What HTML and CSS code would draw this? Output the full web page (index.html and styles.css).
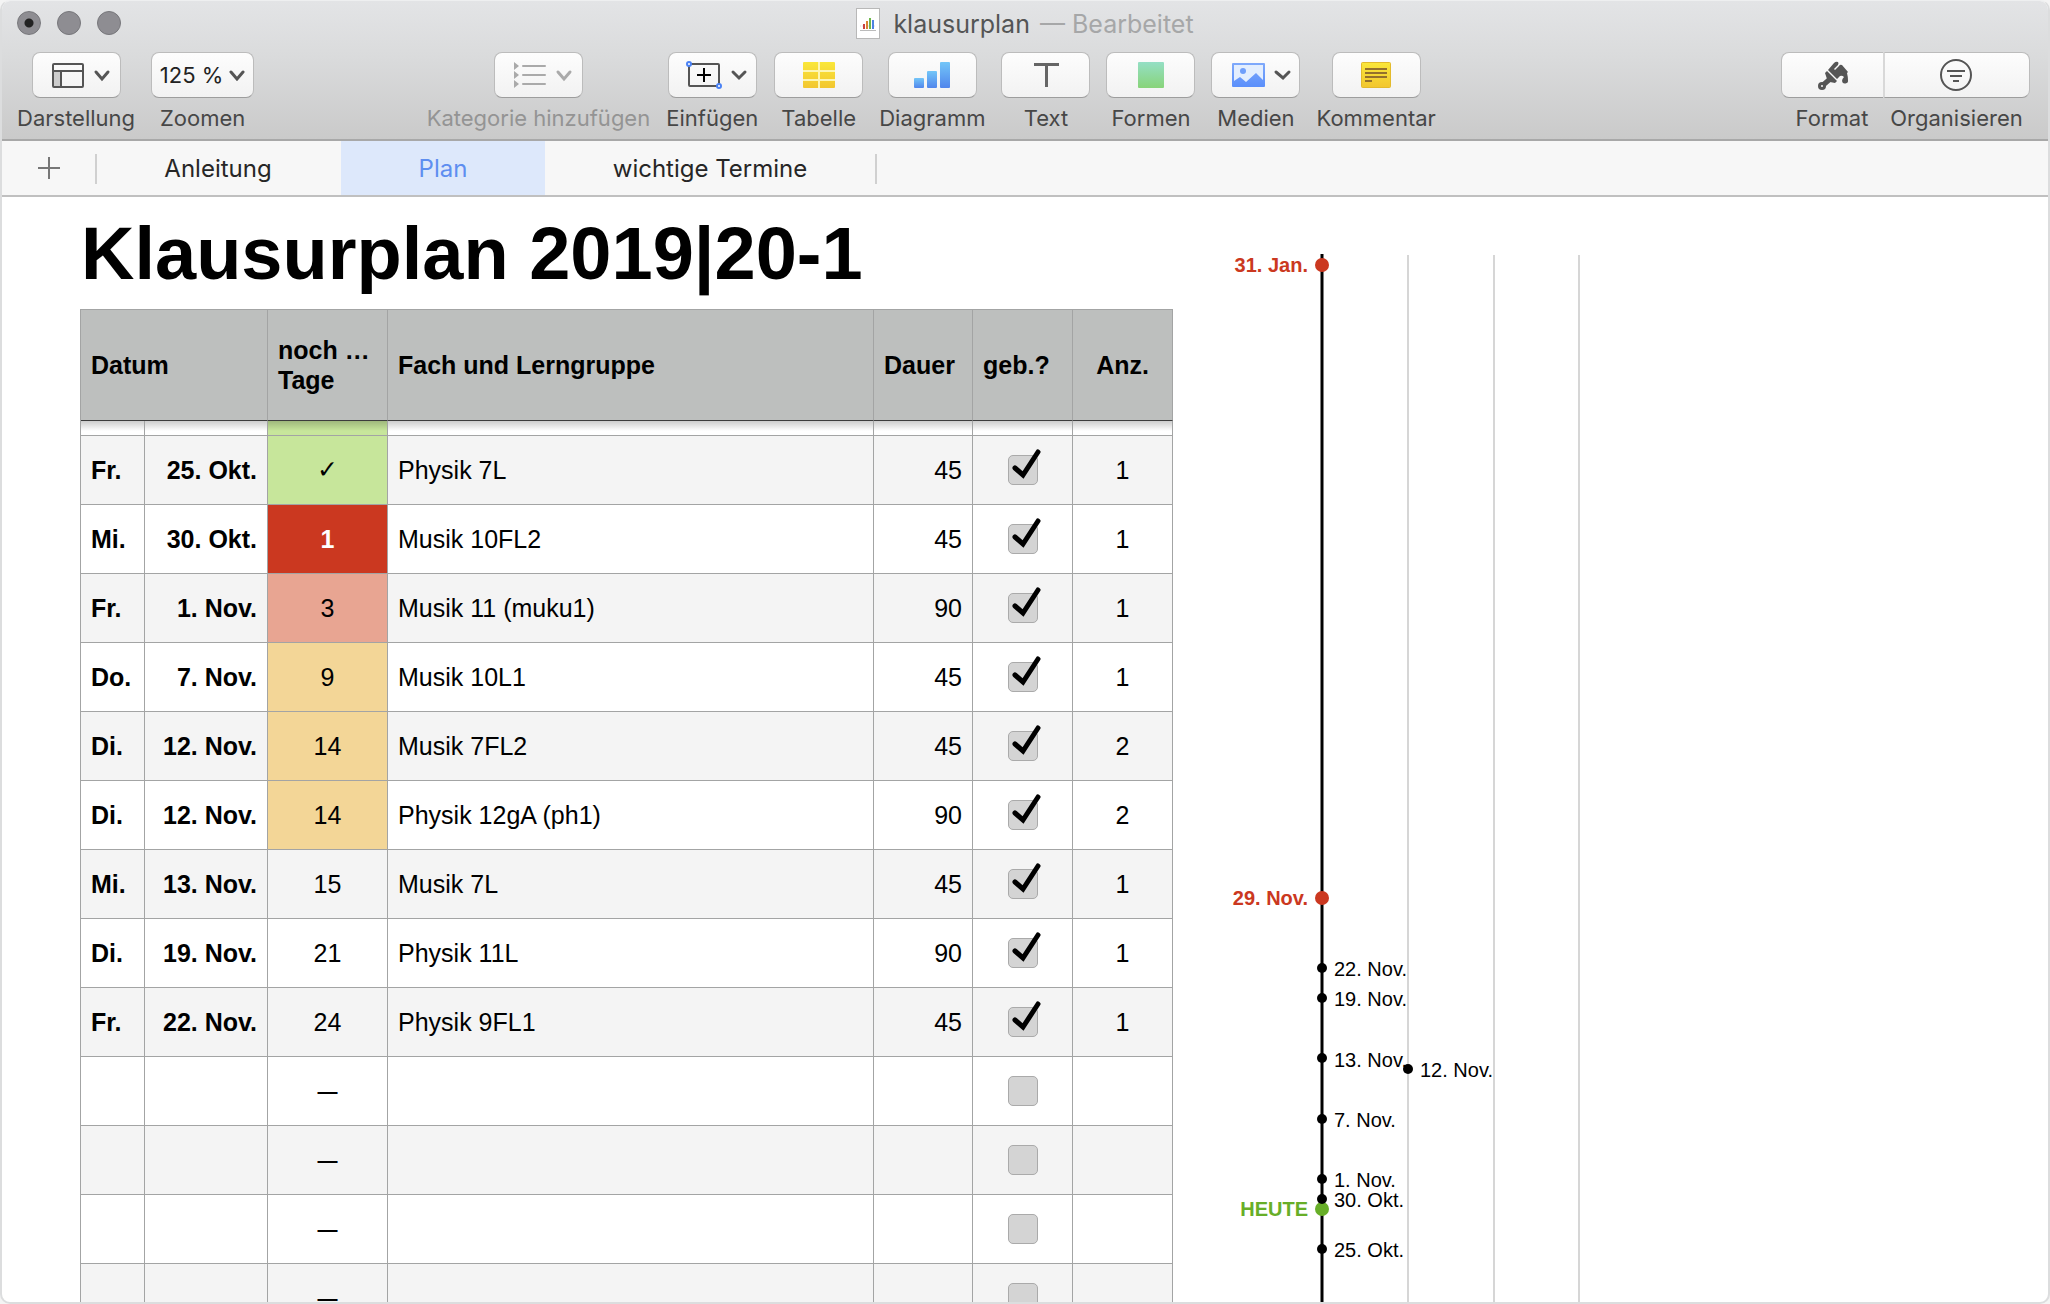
FILE: index.html
```html
<!DOCTYPE html>
<html lang="de">
<head>
<meta charset="utf-8">
<title>klausurplan</title>
<link rel="stylesheet" href="styles.css">
</head>
<body>
<svg class="defs" aria-hidden="true">
  <defs>
    <linearGradient id="yellow" x1="0" y1="0" x2="0" y2="1"><stop offset="0" stop-color="#fae73a"/><stop offset="1" stop-color="#f2c62f"/></linearGradient>
    <linearGradient id="blue" x1="0" y1="0" x2="0" y2="1"><stop offset="0" stop-color="#73c6f8"/><stop offset="1" stop-color="#5186ec"/></linearGradient>
    <linearGradient id="green" x1="0" y1="0" x2="0" y2="1"><stop offset="0" stop-color="#95dfc5"/><stop offset="1" stop-color="#88d479"/></linearGradient>
    <linearGradient id="photo" x1="0" y1="0" x2="0" y2="1"><stop offset="0" stop-color="#7fa9fb"/><stop offset="1" stop-color="#5b8ffb"/></linearGradient>
    <symbol id="tick" viewBox="0 0 40 32" overflow="visible"><path d="M7 17 L15 24 L30 1" fill="none" stroke="#000" stroke-width="5" stroke-linecap="round" stroke-linejoin="miter"/></symbol>
  </defs>
</svg>
<div class="window">
  <header class="chrome">
    <div class="titlebar">
      <div class="lights">
        <button class="light light-edited" aria-label="Schließen"></button>
        <button class="light" aria-label="Minimieren"></button>
        <button class="light" aria-label="Vergrößern"></button>
      </div>
      <div class="doc">
        <svg width="24" height="32" viewBox="0 0 24 32"><rect x=".5" y=".5" width="23" height="30" fill="#fff" stroke="#b8b8b8"/><path d="M4 22.500h16" stroke="#bbb"/><path d="M4 18h16" stroke="#ddd" stroke-dasharray="1 1"/><path d="M8 16v5" stroke="#c9413f" stroke-width="2"/><path d="M11 13v8" stroke="#d98433" stroke-width="2"/><path d="M14 10v11" stroke="#6cb84a" stroke-width="2"/><path d="M17 12v9" stroke="#4d83e0" stroke-width="2"/></svg>
        <span class="doc-name">klausurplan</span>
        <span class="doc-state">— Bearbeitet</span>
      </div>
    </div>
    <div class="toolbar">
      <div class="tools">
        <div class="tool">
          <button class="btn" aria-labelledby="l1"><svg width="88" height="44" viewBox="0 0 88 44" fill="none" stroke="#555" stroke-width="2"><rect x="21" y="18" width="7" height="16" fill="#ccc" stroke="none"/><rect x="21" y="11" width="30" height="23" rx="1"/><path d="M21 18h30M29 18v16"/><path d="M64 19l6 7 6-7" stroke-width="3" stroke-linecap="round"/></svg></button>
          <span class="label" id="l1">Darstellung</span>
        </div>
        <div class="tool">
          <button class="btn btn-zoom" aria-labelledby="l2"><span>125 %</span><svg width="16" height="12" viewBox="0 0 16 12" fill="none" stroke="#555" stroke-width="3" stroke-linecap="round"><path d="M2 3l6 7 6-7"/></svg></button>
          <span class="label" id="l2">Zoomen</span>
        </div>
      </div>
      <div class="tools tools-insert">
        <div class="tool tool-off">
          <button class="btn" disabled aria-labelledby="l3"><svg width="88" height="44" viewBox="0 0 88 44" fill="none" stroke="#aaa" stroke-width="2"><path d="M20 9l5 4-5 4zM20 18l5 4-5 4zM20 27l5 4-5 4z" fill="#aaa" stroke="none"/><path d="M29 13h22M29 22h22M29 31h22" stroke-linecap="round"/><path d="M64 19l6 7 6-7" stroke-width="3" stroke-linecap="round"/></svg></button>
          <span class="label" id="l3">Kategorie hinzufügen</span>
        </div>
        <div class="tool">
          <button class="btn" aria-labelledby="l4"><svg width="88" height="44" viewBox="0 0 88 44" fill="none" stroke="#555" stroke-width="2"><rect x="21" y="11" width="30" height="22" rx="1"/><path d="M36 15v14M29 22h14" stroke="#000"/><circle cx="21" cy="11" r="2" fill="#fff" stroke="#4a82f5"/><circle cx="51" cy="33" r="2" fill="#fff" stroke="#4a82f5"/><path d="M65 19l6 6 6-6" stroke-width="3" stroke-linecap="round"/></svg></button>
          <span class="label" id="l4">Einfügen</span>
        </div>
        <div class="tool">
          <button class="btn" aria-labelledby="l5"><svg width="88" height="44" viewBox="0 0 88 44"><rect x="28" y="9" width="32" height="26" rx="1" fill="url(#yellow)"/><path d="M44 9v26M28 18h32M28 27h32" stroke="#fdf6b4" stroke-width="2"/></svg></button>
          <span class="label" id="l5">Tabelle</span>
        </div>
        <div class="tool">
          <button class="btn" aria-labelledby="l6"><svg width="88" height="44" viewBox="0 0 88 44" fill="url(#blue)"><rect x="26" y="25" width="10" height="10" rx="1"/><rect x="39" y="18" width="10" height="17" rx="1"/><rect x="52" y="9" width="10" height="26" rx="1"/></svg></button>
          <span class="label" id="l6">Diagramm</span>
        </div>
        <div class="tool">
          <button class="btn" aria-labelledby="l7"><svg width="88" height="44" viewBox="0 0 88 44"><path d="M32 10h25v3h-11v21h-3v-21h-11z" fill="#666"/></svg></button>
          <span class="label" id="l7">Text</span>
        </div>
        <div class="tool">
          <button class="btn" aria-labelledby="l8"><svg width="88" height="44" viewBox="0 0 88 44"><rect x="31" y="9" width="26" height="26" rx="1" fill="url(#green)"/></svg></button>
          <span class="label" id="l8">Formen</span>
        </div>
        <div class="tool">
          <button class="btn" aria-labelledby="l9"><svg width="88" height="44" viewBox="0 0 88 44"><rect x="20" y="10" width="33" height="24" rx="1" fill="url(#photo)"/><path d="M22 12h29v15l-7-7-10 9-6-5-6 4z" fill="#e3eefe"/><circle cx="31" cy="18" r="3" fill="#6f9ffb"/><path d="M64 19l7 6 6-6" fill="none" stroke="#555" stroke-width="3" stroke-linecap="round"/></svg></button>
          <span class="label" id="l9">Medien</span>
        </div>
        <div class="tool">
          <button class="btn" aria-labelledby="l10"><svg width="88" height="44" viewBox="0 0 88 44"><rect x="29.500" y="9.500" width="29" height="25" rx="1" fill="url(#yellow)" stroke="#e3ba2c"/><path d="M33 16h22M33 20h22M33 24h22M33 28h7" stroke="#94702c" stroke-width="2"/></svg></button>
          <span class="label" id="l10">Kommentar</span>
        </div>
      </div>
      <div class="segments">
        <div class="tool">
          <button class="btn btn-left" aria-labelledby="l11"><svg width="88" height="44" viewBox="0 0 88 44" fill="#555"><path d="M39 17l6-7q2-2 4-1 1 1 0 3l-4 4 1 1 4-4q1-2 3-1l6 7-1 1q1 4 1 7a3 3 0 1 1-6 1q0-2 2-4-2-2-4-1l-3 3z"/><path d="M36 20l2-2 10 10-2 2-5-1-3-3z"/><path d="M41 26l-8 7" stroke="#555" stroke-width="5" stroke-linecap="round"/><circle cx="33" cy="33" r="4"/><circle cx="33" cy="33" r="1" fill="#f7f7f7"/></svg></button>
          <span class="label" id="l11">Format</span>
        </div>
        <div class="tool">
          <button class="btn btn-right" aria-labelledby="l12"><svg width="88" height="44" viewBox="0 0 88 44" fill="none" stroke="#555" stroke-width="2"><circle cx="43" cy="22" r="15"/><path d="M34 18h18M37 23h12M40 28h6"/></svg></button>
          <span class="label" id="l12">Organisieren</span>
        </div>
      </div>
    </div>
  </header>
  <nav class="tabs">
    <button class="add" aria-label="Blatt hinzufügen"><svg width="22" height="22" viewBox="0 0 22 22"><path d="M0 11h22M11 0v22" stroke="#777" stroke-width="2"/></svg></button>
    <a class="tab" href="#anleitung">Anleitung</a>
    <a class="tab tab-on" href="#plan">Plan</a>
    <a class="tab tab-wide" href="#termine">wichtige Termine</a>
  </nav>
  <main class="sheet">
    <section class="plan">
      <h1>Klausurplan 2019|20-1</h1>
      <table>
        <colgroup><col class="c-day"><col class="c-date"><col class="c-left"><col class="c-subject"><col class="c-time"><col class="c-ok"><col class="c-count"></colgroup>
        <thead>
          <tr><th colspan="2">Datum</th><th>noch … Tage</th><th>Fach und Lerngruppe</th><th>Dauer</th><th>geb.?</th><th class="mid">Anz.</th></tr>
        </thead>
        <tbody>
          <tr class="peek"><td></td><td></td><td class="done"></td><td></td><td></td><td></td><td></td></tr>
          <tr><td>Fr.</td><td>25. Okt.</td><td class="done check">✓</td><td>Physik 7L</td><td>45</td><td><label class="box"><input type="checkbox" checked aria-label="gebucht"><svg><use href="#tick"/></svg></label></td><td>1</td></tr>
          <tr><td>Mi.</td><td>30. Okt.</td><td class="urgent">1</td><td>Musik 10FL2</td><td>45</td><td><label class="box"><input type="checkbox" checked aria-label="gebucht"><svg><use href="#tick"/></svg></label></td><td>1</td></tr>
          <tr><td>Fr.</td><td>1. Nov.</td><td class="near">3</td><td>Musik 11 (muku1)</td><td>90</td><td><label class="box"><input type="checkbox" checked aria-label="gebucht"><svg><use href="#tick"/></svg></label></td><td>1</td></tr>
          <tr><td>Do.</td><td>7. Nov.</td><td class="soon">9</td><td>Musik 10L1</td><td>45</td><td><label class="box"><input type="checkbox" checked aria-label="gebucht"><svg><use href="#tick"/></svg></label></td><td>1</td></tr>
          <tr><td>Di.</td><td>12. Nov.</td><td class="soon">14</td><td>Musik 7FL2</td><td>45</td><td><label class="box"><input type="checkbox" checked aria-label="gebucht"><svg><use href="#tick"/></svg></label></td><td>2</td></tr>
          <tr><td>Di.</td><td>12. Nov.</td><td class="soon">14</td><td>Physik 12gA (ph1)</td><td>90</td><td><label class="box"><input type="checkbox" checked aria-label="gebucht"><svg><use href="#tick"/></svg></label></td><td>2</td></tr>
          <tr><td>Mi.</td><td>13. Nov.</td><td>15</td><td>Musik 7L</td><td>45</td><td><label class="box"><input type="checkbox" checked aria-label="gebucht"><svg><use href="#tick"/></svg></label></td><td>1</td></tr>
          <tr><td>Di.</td><td>19. Nov.</td><td>21</td><td>Physik 11L</td><td>90</td><td><label class="box"><input type="checkbox" checked aria-label="gebucht"><svg><use href="#tick"/></svg></label></td><td>1</td></tr>
          <tr><td>Fr.</td><td>22. Nov.</td><td>24</td><td>Physik 9FL1</td><td>45</td><td><label class="box"><input type="checkbox" checked aria-label="gebucht"><svg><use href="#tick"/></svg></label></td><td>1</td></tr>
          <tr><td></td><td></td><td class="none">—</td><td></td><td></td><td><label class="box"><input type="checkbox" aria-label="gebucht"></label></td><td></td></tr>
          <tr><td></td><td></td><td class="none">—</td><td></td><td></td><td><label class="box"><input type="checkbox" aria-label="gebucht"></label></td><td></td></tr>
          <tr><td></td><td></td><td class="none">—</td><td></td><td></td><td><label class="box"><input type="checkbox" aria-label="gebucht"></label></td><td></td></tr>
          <tr><td></td><td></td><td class="none">—</td><td></td><td></td><td><label class="box"><input type="checkbox" aria-label="gebucht"></label></td><td></td></tr>
        </tbody>
      </table>
    </section>
    <svg class="timeline" width="400" height="1100" viewBox="0 0 400 1100">
      <path class="lane" d="M185 1v1099M271 1v1099M356 1v1099"/>
      <path class="axis" d="M99 0v1100"/>
      <g class="deadline"><circle cx="99" cy="11" r="7"/><text x="85" y="18">31. Jan.</text><circle cx="99" cy="644" r="7"/><text x="85" y="651">29. Nov.</text></g>
      <g class="today"><circle cx="99" cy="955" r="7"/><text x="85" y="962">HEUTE</text></g>
      <g class="exam">
        <circle cx="99" cy="714" r="5"/><text x="111" y="722">22. Nov.</text>
        <circle cx="99" cy="744" r="5"/><text x="111" y="752">19. Nov.</text>
        <circle cx="99" cy="804" r="5"/><text x="111" y="813">13. Nov.</text>
        <circle cx="185" cy="815" r="5"/><text x="197" y="823">12. Nov.</text>
        <circle cx="99" cy="865" r="5"/><text x="111" y="873">7. Nov.</text>
        <circle cx="99" cy="925" r="5"/><text x="111" y="933">1. Nov.</text>
        <circle cx="99" cy="945" r="5"/><text x="111" y="953">30. Okt.</text>
        <circle cx="99" cy="995" r="5"/><text x="111" y="1003">25. Okt.</text>
      </g>
    </svg>
  </main>
</div>
</body>
</html>
```
FILE: styles.css
```css
* { box-sizing: border-box; }
body { margin: 0; background: #f4f4f4; font-family: Inter, "Liberation Sans", sans-serif; color: #262626; }
button { margin: 0; padding: 0; border: 0; background: none; font: inherit; color: inherit; }
.defs { position: absolute; width: 0; height: 0; }

.window { display: flex; flex-direction: column; height: 100vh; border: 2px solid #dcddde; border-top: 1px solid #eeeff0; border-radius: 10px; overflow: hidden; background: #fff; }

.chrome { flex: none; background: linear-gradient(#e3e4e6, #dadbdc 40%, #cacaca); border-bottom: 2px solid #a8a8a8; }
.titlebar { position: relative; display: flex; justify-content: center; height: 46px; }
.lights { position: absolute; left: 15px; top: 10px; display: flex; gap: 16px; }
.light { width: 24px; height: 24px; border: 1px solid #77777b; border-radius: 50%; background: #8e8d92; }
.light-edited { background: radial-gradient(circle, #222 4px, #8e8d92 5px); }
.doc { display: flex; align-items: center; font-size: 25px; }
.doc-name { margin: 0 10px 0 13px; color: #545555; }
.doc-state { color: #a6a7a8; }

.toolbar { display: flex; height: 92px; padding: 5px 18px 0 15px; }
.tools { display: flex; gap: 16px; }
/* free space is shared one part to two around the insert tools */
.tools-insert::before { content: none; }
.toolbar::before { content: ""; order: 2; flex: 1; }
.toolbar::after { content: ""; order: 4; flex: 2; }
.tools-insert { order: 3; }
.segments { order: 5; display: flex; }
.tool { display: flex; flex-direction: column; align-items: center; }
.label { margin-top: 5px; font-size: 22px; line-height: 30px; color: #474747; white-space: nowrap; }
.tool-off .label { color: #949494; }
.btn { display: flex; align-items: center; justify-content: center; width: 89px; height: 46px; border: 1px solid #bcbcbc; border-bottom-color: #9d9d9d; border-radius: 8px; background: linear-gradient(#fdfdfd, #f2f2f2); color: #222; font-size: 22px; }
.btn svg { flex: none; }
.btn-zoom { width: 103px; gap: 6px; }
.btn-left { width: 102px; border-radius: 8px 0 0 8px; border-right: 0; }
.btn-right { width: 147px; border-radius: 0 8px 8px 0; border-left: 2px solid #d8d8d8; }

.tabs { flex: none; display: flex; height: 56px; background: #f7f7f7; border-bottom: 2px solid #c0c0c0; font-size: 24px; }
.add { display: grid; place-items: center; width: 93px; }
.add, .tab-wide { position: relative; }
.add::after, .tab-wide::after { content: ""; position: absolute; right: -2px; top: 13px; width: 2px; height: 30px; background: #d0d0d0; }
.tab { display: grid; place-items: center; width: 246px; color: #262626; text-decoration: none; }
.tab-on { width: 204px; background: #dde8fb; color: #5e8ef0; }
.tab-wide { width: 330px; }

.sheet { flex: 1; min-height: 0; display: flex; align-items: flex-start; padding-left: 78px; overflow: hidden; font-family: "Liberation Sans", Arial, sans-serif; color: #000; }
.plan { flex: none; padding-top: 8px; }
h1 { margin: 0 0 6px; padding-left: 1px; font-size: 74px; line-height: 98px; font-weight: bold; white-space: nowrap; }
table { width: 1093px; table-layout: fixed; border-spacing: 0; border: solid #a3a4a4; border-width: 1px 0 0 1px; font-size: 25px; line-height: 30px; }
.c-day { width: 64px; }
.c-date { width: 123px; }
.c-left { width: 120px; }
.c-subject { width: 486px; }
.c-time { width: 99px; }
.c-ok, .c-count { width: 100px; }
th, td { padding: 0 10px; border: solid #a3a4a4; border-width: 0 1px 1px 0; text-align: left; }
th { height: 111px; background: #bdbfbe; border-bottom-color: #3c3c3c; }
td { height: 69px; }
tbody tr:nth-child(even) { background: #f4f4f4; }
.peek td { height: 15px; background-image: linear-gradient(rgba(0, 0, 0, .2), rgba(0, 0, 0, 0) 10px); }
td:nth-child(1) { font-weight: bold; }
td:nth-child(2) { padding-left: 0; font-weight: bold; text-align: right; }
td:nth-child(3), td:nth-child(6), td:nth-child(7), .mid { text-align: center; }
td:nth-child(5) { text-align: right; }
.done { background-color: #c7e69b; }
.check { font-family: "DejaVu Sans", sans-serif; }
.urgent { background: #cb3820; color: #fff; font-weight: bold; }
.near { background: #e8a592; }
.soon { background: #f3d697; }
td.none { font-size: 20px; font-weight: bold; }

.box { position: relative; display: block; width: 30px; height: 30px; margin: 0 auto; }
.box input { display: block; appearance: none; width: 30px; height: 30px; margin: 0; border: 1px solid #aaa; border-radius: 5px; background: #d4d4d4; }
.box svg { position: absolute; left: 0; top: -4px; width: 40px; height: 32px; overflow: visible; pointer-events: none; }

.timeline { flex: none; margin: 57px 0 0 50px; font-size: 20px; }
.lane { fill: none; stroke: #d6d6d6; stroke-width: 2; }
.axis { fill: none; stroke: #000; stroke-width: 3; }
.deadline { fill: #cb3820; font-weight: bold; text-anchor: end; }
.today { fill: #67ae28; font-weight: bold; text-anchor: end; }
.exam { fill: #000; }
```
